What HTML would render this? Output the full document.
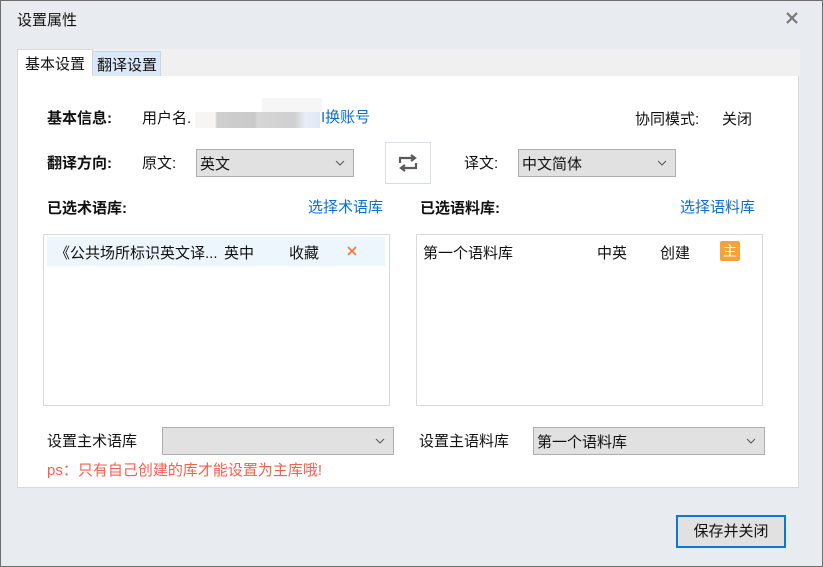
<!DOCTYPE html>
<html><head><meta charset="utf-8"><style>
*{margin:0;padding:0;box-sizing:border-box}
body{width:823px;height:567px;overflow:hidden;background:#e8ebf0;font-family:"Liberation Sans","Noto Sans CJK SC",sans-serif;font-size:15px;color:#111;position:relative}
.win{position:absolute;left:0;top:0;width:823px;height:567px;border:1px solid #6e6e6e}
.a{position:absolute;white-space:nowrap}
.b{font-weight:bold}
.link{color:#0a6fd1}
.sel{position:absolute;height:28px;background:#e1e1e1;border:1px solid #adadad;padding:3px 3px;font-size:15px}
.sel svg{position:absolute;right:8px;top:10px}
.box{position:absolute;background:#fff;border:1px solid #d9d9d9}
</style></head><body>
<div class="win"></div>
<div class="a" style="left:17px;top:9px">设置属性</div>
<svg class="a" style="left:786px;top:12px" width="12" height="12"><path d="M1 1L11 11M11 1L1 11" stroke="#777" stroke-width="2.2"/></svg>
<div class="a" style="left:17px;top:49px;width:783px;height:28px;background:#f0f0f0"></div>
<div class="a" style="left:17px;top:49px;width:76px;height:29px;background:#fff;border:1px solid #d9d9d9;border-bottom:none;padding:3px 7px">基本设置</div>
<div class="a" style="left:92px;top:51px;width:69px;height:25px;background:#dbe8f7;border:1px solid #c9d6e6;border-bottom:none;padding:2px 4px">翻译设置</div>
<div class="a" style="left:17px;top:76px;width:782px;height:412px;background:#fff;border:1px solid #d9d9d9;border-top:none"></div>

<div class="a b" style="left:47px;top:107px">基本信息:</div>
<div class="a" style="left:142px;top:107px">用户名.</div>
<div class="a" style="left:195px;top:112px;width:125px;height:16px;background:linear-gradient(90deg,#f7f5f3 0,#f7f5f3 20px,#cfcfcf 22px,#c9c9c9 60px,#d6d6d6 62px,#d0d0d0 100px,#e8eef6 110px,#dfe8f6 125px)"></div>
<div class="a" style="left:262px;top:98px;width:60px;height:14px;background:#f6f6f6"></div>
<div class="a link" style="left:321px;top:106px">I换账号</div>
<div class="a" style="left:635px;top:108px">协同模式:</div>
<div class="a" style="left:722px;top:108px">关闭</div>

<div class="a b" style="left:47px;top:152px">翻译方向:</div>
<div class="a" style="left:142px;top:152px">原文:</div>
<div class="sel" style="left:196px;top:149px;width:158px">英文<svg width="10" height="6"><path d="M1 1L5 5L9 1" stroke="#555" fill="none"/></svg></div>
<div class="a" style="left:385px;top:142px;width:46px;height:42px;border:1px solid #d8dde6;background:#fff"></div>
<svg class="a" style="left:397px;top:154px" width="22" height="18"><path d="M3 9V4H17M14 1L18 4L14 7M19 9V14H5M8 11L4 14L8 17" stroke="#5a5a5a" stroke-width="2.2" fill="none"/></svg>
<div class="a" style="left:464px;top:152px">译文:</div>
<div class="sel" style="left:518px;top:149px;width:158px">中文简体<svg width="10" height="6"><path d="M1 1L5 5L9 1" stroke="#555" fill="none"/></svg></div>

<div class="a b" style="left:47px;top:197px">已选术语库:</div>
<div class="a link" style="left:308px;top:196px">选择术语库</div>
<div class="a b" style="left:420px;top:197px">已选语料库:</div>
<div class="a link" style="left:680px;top:196px">选择语料库</div>

<div class="box" style="left:43px;top:234px;width:347px;height:172px"></div>
<div class="a" style="left:47px;top:237px;width:338px;height:29px;background:#eef6fd"></div>
<div class="a" style="left:55px;top:242px">《公共场所标识英文译...</div>
<div class="a" style="left:224px;top:242px">英中</div>
<div class="a" style="left:289px;top:242px">收藏</div>
<svg class="a" style="left:347px;top:246px" width="10" height="10"><path d="M1 1L9 9M9 1L1 9" stroke="#f07a4a" stroke-width="1.8"/></svg>

<div class="box" style="left:416px;top:234px;width:347px;height:172px"></div>
<div class="a" style="left:423px;top:242px">第一个语料库</div>
<div class="a" style="left:597px;top:242px">中英</div>
<div class="a" style="left:660px;top:242px">创建</div>
<div class="a" style="left:720px;top:241px;width:20px;height:20px;background:#f2a33a;border-radius:2px;color:#fff;font-size:14px;text-align:center;line-height:20px">主</div>

<div class="a" style="left:47px;top:430px">设置主术语库</div>
<div class="sel" style="left:162px;top:427px;width:232px"><svg width="10" height="6"><path d="M1 1L5 5L9 1" stroke="#555" fill="none"/></svg></div>
<div class="a" style="left:419px;top:430px">设置主语料库</div>
<div class="sel" style="left:533px;top:427px;width:232px">第一个语料库<svg width="10" height="6"><path d="M1 1L5 5L9 1" stroke="#555" fill="none"/></svg></div>
<div class="a" style="left:47px;top:459px;color:#f5614f">ps：只有自己创建的库才能设置为主库哦!</div>

<div class="a" style="left:676px;top:515px;width:110px;height:33px;background:#e1e1e1;border:2px solid #0a78d7;text-align:center;line-height:29px">保存并关闭</div>
</body></html>
